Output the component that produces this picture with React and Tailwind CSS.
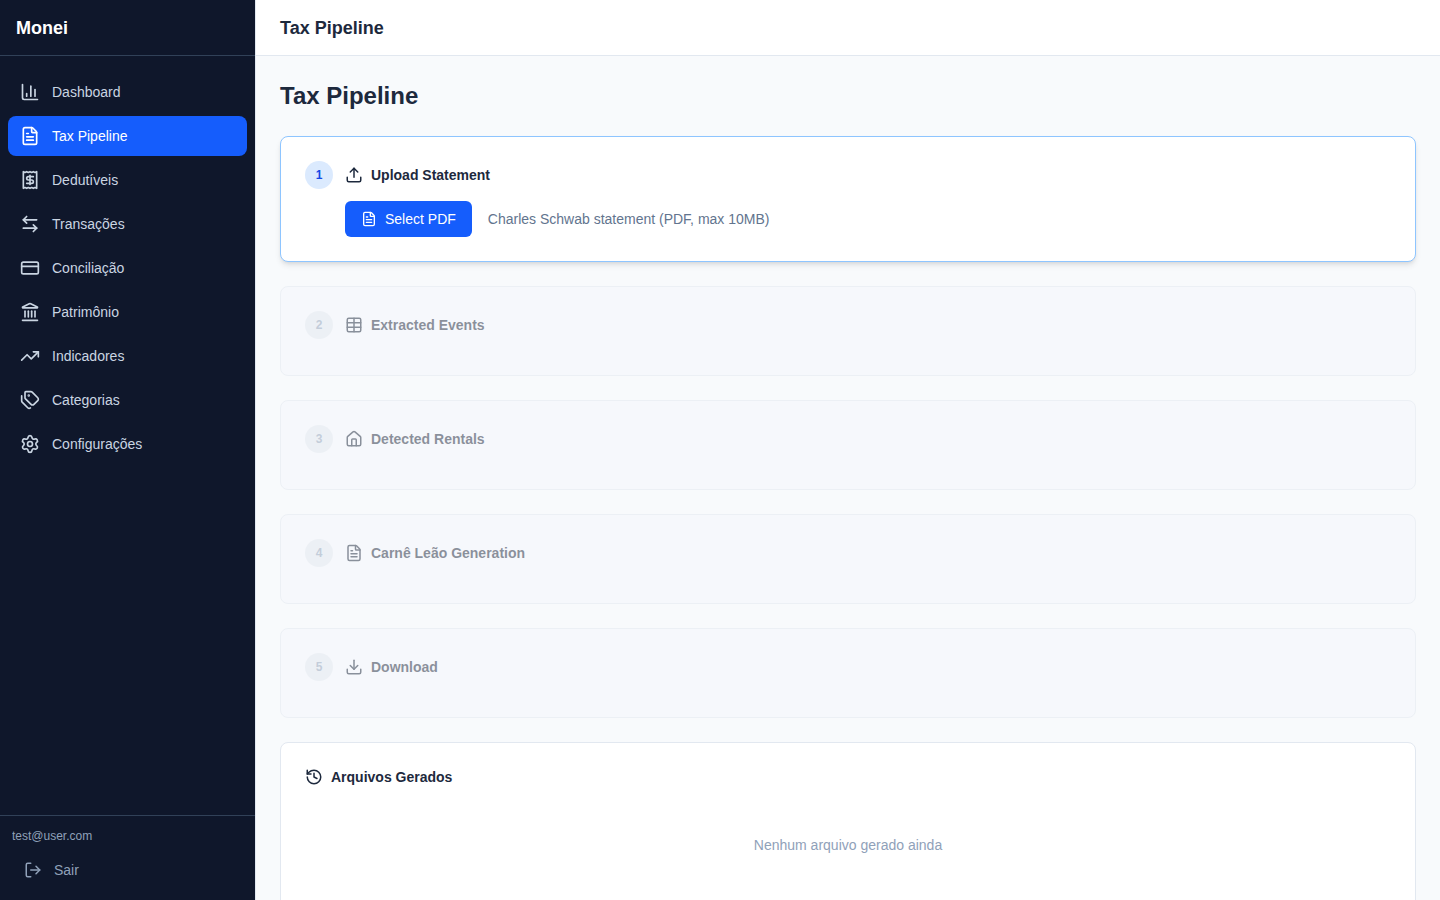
import React, { useRef, useState } from "react";
import {
  ArrowLeftRight,
  ChartColumn,
  CreditCard,
  Download,
  FileText,
  History,
  House,
  Landmark,
  LogOut,
  Receipt,
  Settings,
  Table,
  Tags,
  TrendingUp,
  Upload,
} from "lucide-react";
import clsx from "clsx";

const navItems = [
  { label: "Dashboard", path: "dashboard", icon: ChartColumn },
  { label: "Tax Pipeline", path: "tax-pipeline", icon: FileText },
  { label: "Dedutíveis", path: "dedutiveis", icon: Receipt },
  { label: "Transações", path: "transacoes", icon: ArrowLeftRight },
  { label: "Conciliação", path: "conciliacao", icon: CreditCard },
  { label: "Patrimônio", path: "patrimonio", icon: Landmark },
  { label: "Indicadores", path: "indicadores", icon: TrendingUp },
  { label: "Categorias", path: "categorias", icon: Tags },
  { label: "Configurações", path: "configuracoes", icon: Settings },
];

function Sidebar({ current, onNavigate }) {
  return (
    <aside className="flex w-64 shrink-0 flex-col border-r border-slate-200 bg-slate-900">
      <div className="flex h-14 items-center border-b border-slate-700 px-4">
        <span className="text-lg font-bold text-white">Monei</span>
      </div>

      <nav className="flex-1 space-y-1 overflow-y-auto px-2 py-4">
        {navItems.map(({ label, path, icon: Icon }) => (
          <a
            key={path}
            href={`#${path}`}
            onClick={() => onNavigate(path)}
            className={clsx(
              "flex items-center gap-3 rounded-lg px-3 py-2.5 text-sm",
              path === current
                ? "bg-blue-600 text-white"
                : "text-slate-300 hover:bg-slate-800"
            )}
          >
            <Icon size={20} />
            {label}
          </a>
        ))}
      </nav>

      <div className="border-t border-slate-700 p-3">
        <p className="mb-2 truncate text-xs text-slate-400">test@user.com</p>
        <button
          type="button"
          className="flex w-full items-center gap-3 rounded-lg px-3 py-2 text-sm text-slate-400 hover:bg-slate-800"
        >
          <LogOut size={18} />
          Sair
        </button>
      </div>
    </aside>
  );
}

function StepCard({ number, title, icon: Icon, active, children }) {
  return (
    <section
      className={clsx(
        "rounded-lg border p-6",
        active
          ? "border-blue-300 bg-white shadow-md"
          : "border-slate-200 bg-[#f5f7fc] opacity-50"
      )}
    >
      <div className="mb-3 flex items-center gap-3">
        <span
          className={clsx(
            "flex size-7 items-center justify-center rounded-full text-xs font-bold",
            active ? "bg-blue-100 text-blue-700" : "bg-slate-200 text-slate-400"
          )}
        >
          {number}
        </span>
        <div className="flex items-center gap-2 text-slate-800">
          <Icon size={18} />
          <h3 className="text-sm font-semibold">{title}</h3>
        </div>
      </div>
      {children && <div className="pl-10">{children}</div>}
    </section>
  );
}

function UploadStep() {
  const inputRef = useRef(null);
  const [fileName, setFileName] = useState("");

  const handleChange = (e) => {
    const file = e.target.files[0];
    setFileName(file ? file.name : "");
  };

  return (
    <div className="flex items-center gap-4">
      <input
        ref={inputRef}
        type="file"
        accept="application/pdf"
        aria-label="Select PDF"
        className="hidden"
        onChange={handleChange}
      />
      <button
        type="button"
        onClick={() => inputRef.current.click()}
        className="flex items-center gap-2 rounded-md bg-blue-600 px-4 py-2 text-sm text-white hover:bg-blue-700"
      >
        <FileText size={16} />
        Select PDF
      </button>
      <span className="text-sm text-slate-500">
        {fileName || "Charles Schwab statement (PDF, max 10MB)"}
      </span>
    </div>
  );
}

function App() {
  const [current, setCurrent] = useState("tax-pipeline");

  return (
    <div className="flex h-screen overflow-hidden bg-slate-50 font-['Liberation_Sans',Arial,sans-serif]">
      <Sidebar current={current} onNavigate={setCurrent} />

      <div className="flex min-w-0 flex-1 flex-col">
        <header className="flex h-14 shrink-0 items-center border-b border-slate-200 bg-white px-6">
          <h1 className="text-lg font-semibold text-slate-800">Tax Pipeline</h1>
        </header>

        <main className="flex-1 space-y-6 overflow-y-auto p-6">
          <h2 className="text-2xl font-bold text-slate-800">Tax Pipeline</h2>

          <StepCard number={1} title="Upload Statement" icon={Upload} active>
            <UploadStep />
          </StepCard>
          <StepCard number={2} title="Extracted Events" icon={Table} />
          <StepCard number={3} title="Detected Rentals" icon={House} />
          <StepCard number={4} title="Carnê Leão Generation" icon={FileText} />
          <StepCard number={5} title="Download" icon={Download} />

          <section className="rounded-lg border border-slate-200 bg-white p-6">
            <div className="mb-4 flex items-center gap-2 text-slate-800">
              <History size={18} />
              <h3 className="text-sm font-semibold">Arquivos Gerados</h3>
            </div>
            <p className="py-8 text-center text-sm text-slate-400">
              Nenhum arquivo gerado ainda
            </p>
          </section>
        </main>
      </div>
    </div>
  );
}

export default App;
